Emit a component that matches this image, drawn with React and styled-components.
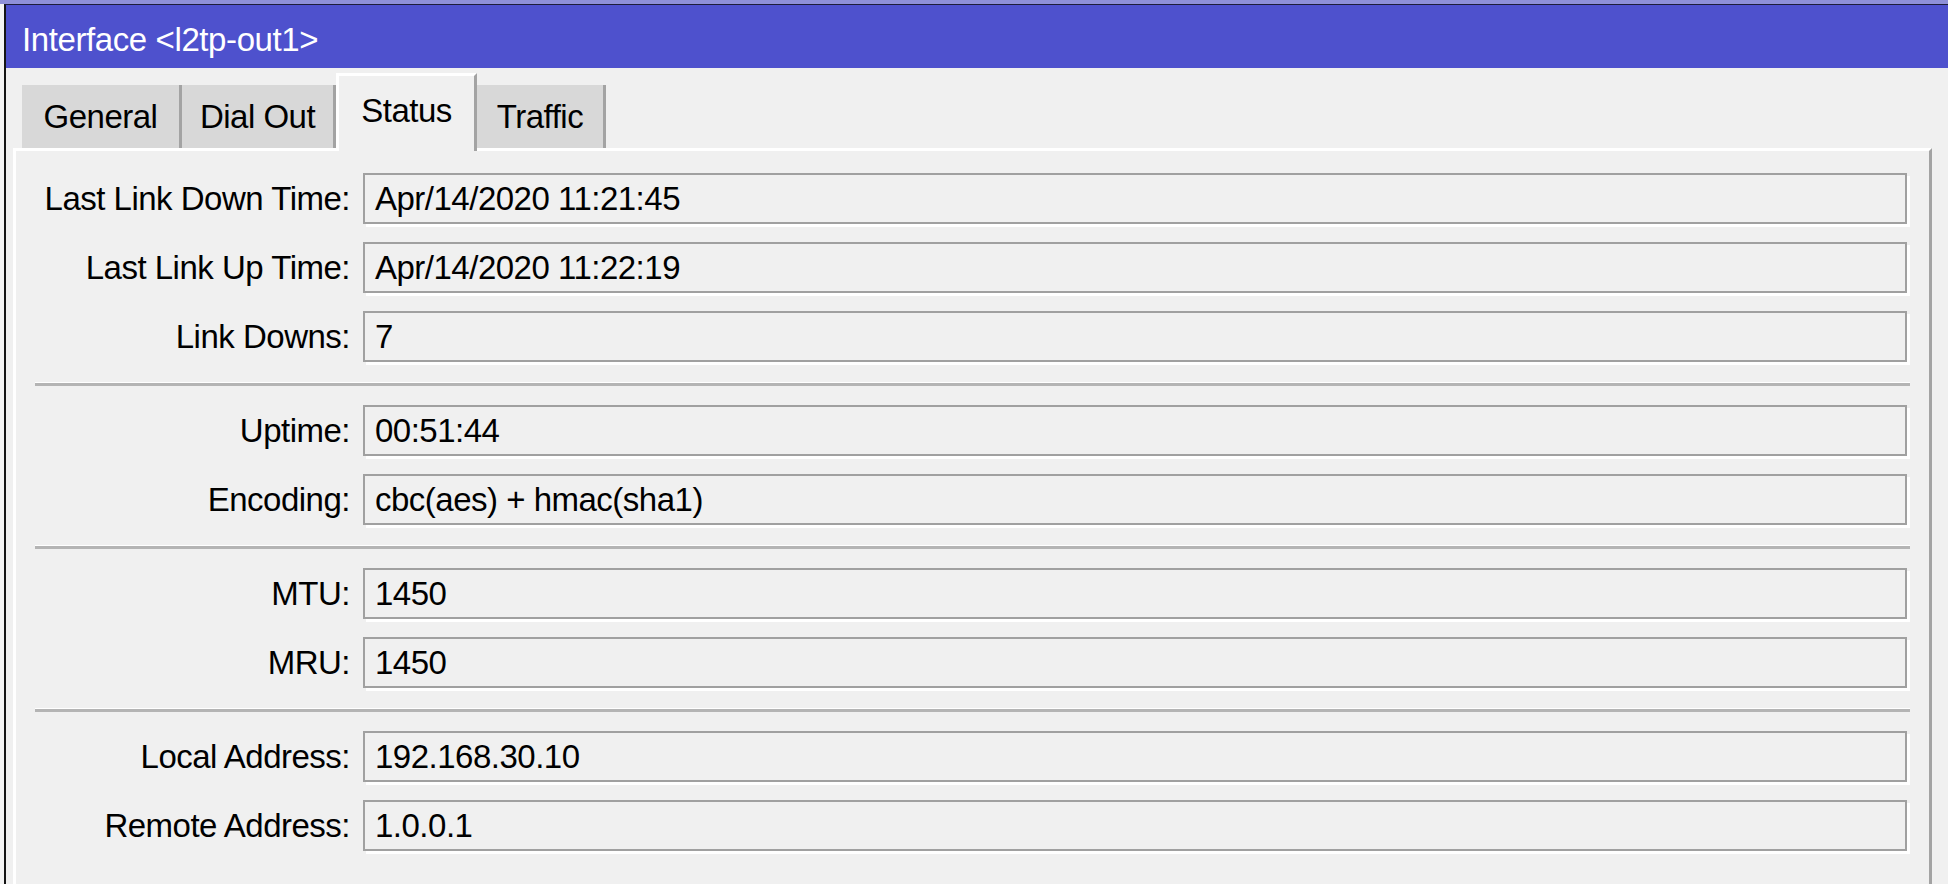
import styled, { createGlobalStyle } from 'styled-components';

const GlobalStyle = createGlobalStyle`
  html, body {
    margin: 0;
    padding: 0;
    background: #f0f0f0;
  }
  body {
    font-family: 'Liberation Sans', Arial, sans-serif;
  }
`;

const Screen = styled.div`
  height: 100vh;
  box-sizing: border-box;
  border-top: 4px solid #8e90d8;
  padding-left: 4px;
  background: #f4f4f4;
  display: flex;
  overflow: hidden;
`;

const Window = styled.div`
  flex: 1;
  min-width: 0;
  display: flex;
  flex-direction: column;
  border-top: 1px solid #1d1d3a;
  border-left: 2px solid #141414;
  background: #f0f0f0;
`;

const TitleBar = styled.div`
  height: 63px;
  box-sizing: border-box;
  padding: 6px 0 0 16px;
  display: flex;
  align-items: center;
  background: #4e51cd;
  color: #fff;
  font-size: 33px;
  letter-spacing: -0.4px;
  white-space: nowrap;
`;

const TabStrip = styled.div`
  display: flex;
  align-items: flex-end;
  padding: 5px 0 0 16px;
  position: relative;
  z-index: 1;
`;

const Tab = styled.div`
  width: ${(p) => p.$width}px;
  height: ${(p) => (p.$active ? 78 : 63)}px;
  margin-bottom: ${(p) => (p.$active ? -3 : 0)}px;
  box-sizing: border-box;
  padding-bottom: ${(p) => (p.$active ? 6 : 0)}px;
  display: flex;
  align-items: center;
  justify-content: center;
  background: ${(p) => (p.$active ? '#f0f0f0' : '#d8d8d8')};
  border-right: 3px solid #a3a3a3;
  border-top: ${(p) => (p.$active ? '3px solid #fff' : 'none')};
  border-left: ${(p) => (p.$active ? '3px solid #fff' : 'none')};
  color: #000;
  font-size: 33px;
  letter-spacing: -0.5px;
  white-space: nowrap;
`;

const Panel = styled.div`
  flex: 1;
  margin: 0 16px 0 7px;
  padding: 22px 19px 0 19px;
  display: flex;
  flex-direction: column;
  border-top: 3px solid #fff;
  border-left: 3px solid #fff;
  border-right: 3px solid #a3a3a3;
`;

const Section = styled.div`
  display: flex;
  flex-direction: column;
  gap: 18px;
`;

const Separator = styled.div`
  height: 3px;
  margin: 19.5px 0 19.5px;
  border-top: 1px solid #fff;
  background: #b4b4b4;
`;

const Row = styled.div`
  display: grid;
  grid-template-columns: 315px 1fr;
  column-gap: 13px;
  align-items: center;
  padding-right: 3px;
`;

const Label = styled.div`
  text-align: right;
  color: #000;
  font-size: 33px;
  letter-spacing: -0.5px;
  white-space: nowrap;
`;

const Field = styled.div`
  height: 51px;
  box-sizing: border-box;
  padding-left: 10px;
  display: flex;
  align-items: center;
  border: 2px solid #a0a0a0;
  box-shadow: 3px 3px 0 #fff;
  color: #000;
  font-size: 33px;
  letter-spacing: -0.5px;
  white-space: nowrap;
`;

const tabs = [
  { name: 'General', width: 160 },
  { name: 'Dial Out', width: 154 },
  { name: 'Status', width: 141, active: true },
  { name: 'Traffic', width: 129 },
];

const sections = [
  [
    ['Last Link Down Time:', 'Apr/14/2020 11:21:45'],
    ['Last Link Up Time:', 'Apr/14/2020 11:22:19'],
    ['Link Downs:', '7'],
  ],
  [
    ['Uptime:', '00:51:44'],
    ['Encoding:', 'cbc(aes) + hmac(sha1)'],
  ],
  [
    ['MTU:', '1450'],
    ['MRU:', '1450'],
  ],
  [
    ['Local Address:', '192.168.30.10'],
    ['Remote Address:', '1.0.0.1'],
  ],
];

export default function App() {
  return (
    <>
      <GlobalStyle />
      <Screen>
        <Window>
          <TitleBar>Interface &lt;l2tp-out1&gt;</TitleBar>
          <TabStrip>
            {tabs.map((t) => (
              <Tab key={t.name} $width={t.width} $active={t.active}>
                {t.name}
              </Tab>
            ))}
          </TabStrip>
          <Panel>
            {sections.map((rows, i) => (
              <div key={i}>
                {i > 0 && <Separator />}
                <Section>
                  {rows.map(([label, value]) => (
                    <Row key={label}>
                      <Label>{label}</Label>
                      <Field>{value}</Field>
                    </Row>
                  ))}
                </Section>
              </div>
            ))}
          </Panel>
        </Window>
      </Screen>
    </>
  );
}
